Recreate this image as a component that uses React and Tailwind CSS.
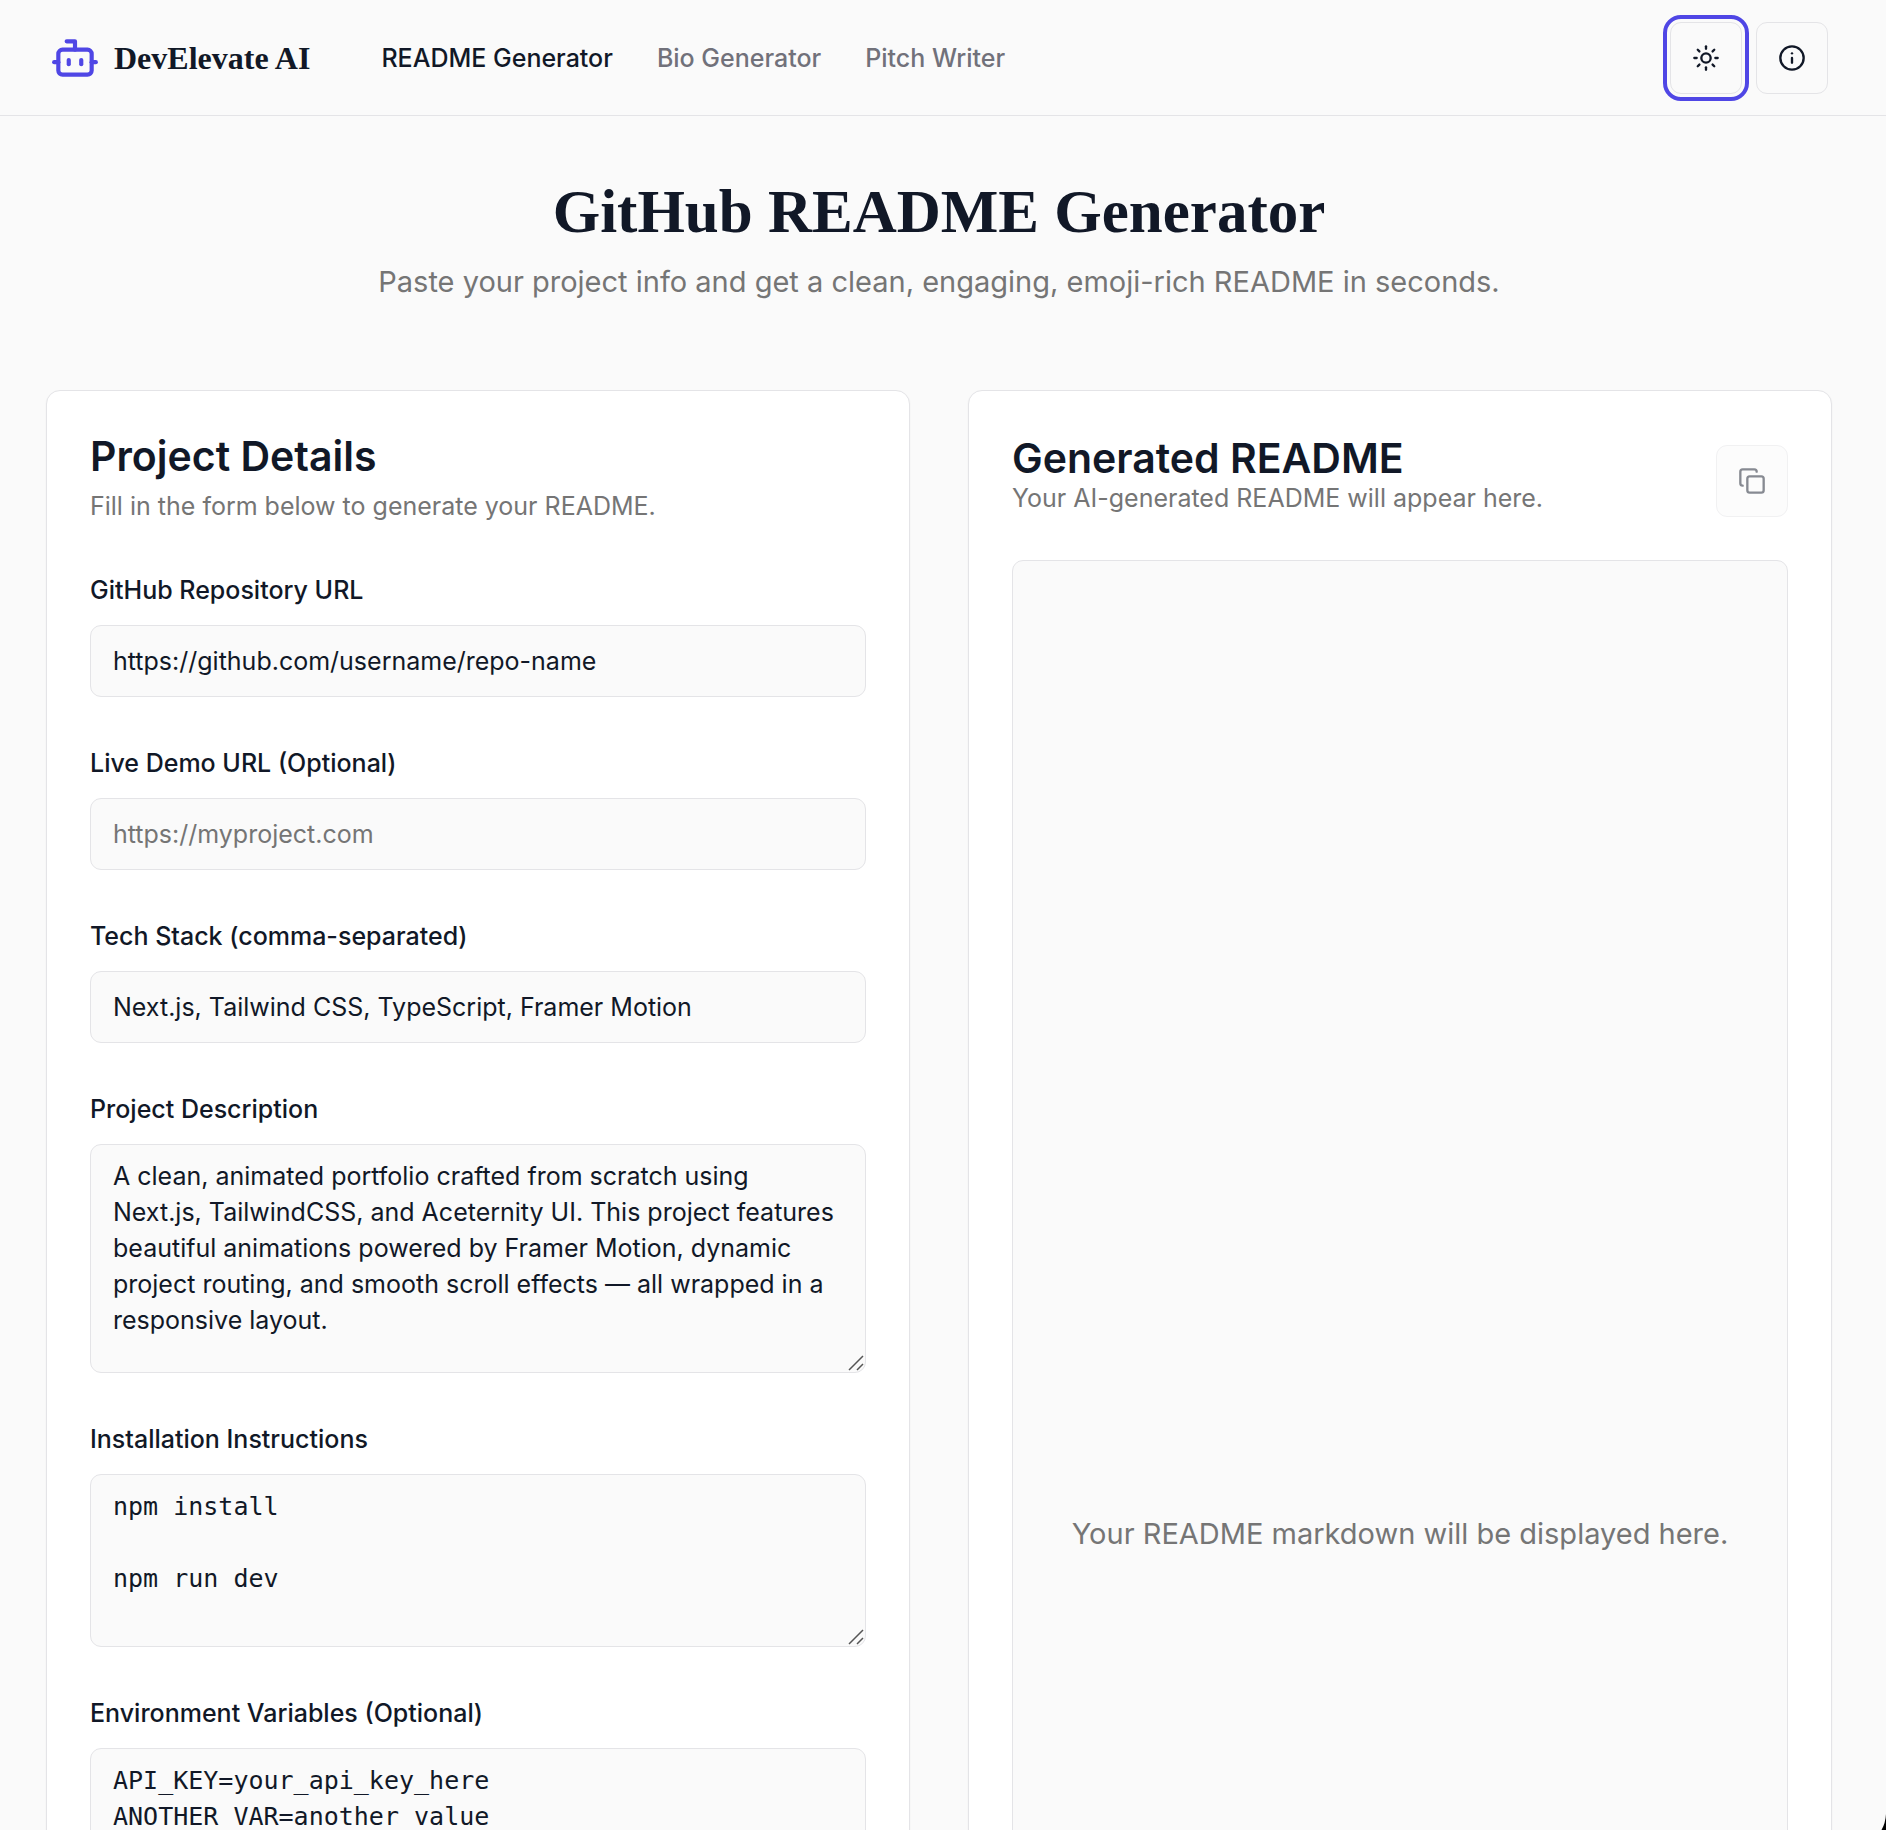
import { Bot, Copy, Info, Sun } from "lucide-react";

const NAV_LINKS = [
  { label: "README Generator", active: true },
  { label: "Bio Generator", active: false },
  { label: "Pitch Writer", active: false },
];

const BOX =
  "block w-full rounded-[11px] border border-[#e4e4e7] bg-[#fafafa] px-[22px] text-[25px] leading-[36px] text-[#111827] outline-none placeholder:text-[#757575]";

function ResizeGrip() {
  return (
    <svg
      className="pointer-events-none absolute right-0.5 bottom-0.5"
      width="16"
      height="16"
      viewBox="0 0 16 16"
      fill="none"
      stroke="#555555"
      strokeWidth="1.5"
      aria-hidden="true"
    >
      <path d="M1 15 15 1M9 15l6-6" />
    </svg>
  );
}

function Field({ id, label, children }) {
  return (
    <div>
      <label htmlFor={id} className="mb-[17px] block text-[25px] leading-[36px] font-medium">
        {label}
      </label>
      {children}
    </div>
  );
}

function TextField({ id, label, ...props }) {
  return (
    <Field id={id} label={label}>
      <input id={id} type="text" className={`${BOX} h-[72px]`} {...props} />
    </Field>
  );
}

function AreaField({ id, label, className, ...props }) {
  return (
    <Field id={id} label={label}>
      <div className="relative">
        <textarea
          id={id}
          className={`${BOX} resize-none overflow-hidden ${className}`}
          {...props}
        />
        <ResizeGrip />
      </div>
    </Field>
  );
}

function IconButton({ label, className = "", children, ...props }) {
  return (
    <button
      type="button"
      aria-label={label}
      className={`flex size-[72px] shrink-0 items-center justify-center rounded-[11px] border border-[#e4e4e7] bg-[#fafafa] ${className}`}
      {...props}
    >
      {children}
    </button>
  );
}

export default function App() {
  return (
    <div className="relative h-screen overflow-hidden bg-[#fafafa] font-['Inter',sans-serif] text-[#111827]">
      <div className="h-full overflow-y-auto [scrollbar-width:none]">
        <header className="flex h-[116px] items-center border-b border-[#e4e4e7] pr-[58px] pl-[50px]">
          <a href="#home" className="flex items-center gap-[14px]">
            <Bot size={50} className="text-[#4f46e5]" />
            <span className="font-['Liberation_Serif',serif] text-[32px] leading-[50px] font-bold">
              DevElevate AI
            </span>
          </a>
          <nav className="ml-[71px] flex items-center gap-[44px] text-[25px] leading-[36px] font-medium">
            {NAV_LINKS.map((link) => (
              <a
                key={link.label}
                href="#nav"
                className={link.active ? "text-[#111827]" : "text-[#71717a]"}
              >
                {link.label}
              </a>
            ))}
          </nav>
          <div className="ml-auto flex items-center gap-[14px]">
            <IconButton
              label="Toggle theme"
              className="outline-4 outline-offset-3 outline-[#4f46e5]"
            >
              <Sun size={28} />
            </IconButton>
            <IconButton label="About">
              <Info size={28} />
            </IconButton>
          </div>
        </header>

        <main className="pt-16 pr-[54px] pb-16 pl-[46px]">
          <div className="text-center">
            <h1 className="font-['Liberation_Serif',serif] text-[61px] leading-[64px] font-bold">
              GitHub README Generator
            </h1>
            <p className="mt-[18px] text-[29px] leading-[40px] text-[#757575]">
              Paste your project info and get a clean, engaging, emoji-rich README in seconds.
            </p>
          </div>

          <div className="mt-[88px] grid grid-cols-2 gap-[58px]">
            <section className="rounded-[14px] border border-[#e4e4e7] bg-white p-[43px] shadow-xs">
              <h2 className="text-[41px] leading-[44px] font-semibold">Project Details</h2>
              <p className="mt-[10px] text-[25px] leading-[36px] text-[#757575]">
                Fill in the form below to generate your README.
              </p>
              <form className="mt-12 flex flex-col gap-12">
                <TextField
                  id="repo"
                  label="GitHub Repository URL"
                  defaultValue="https://github.com/username/repo-name"
                />
                <TextField
                  id="demo"
                  label="Live Demo URL (Optional)"
                  placeholder="https://myproject.com"
                />
                <TextField
                  id="stack"
                  label="Tech Stack (comma-separated)"
                  defaultValue="Next.js, Tailwind CSS, TypeScript, Framer Motion"
                />
                <AreaField
                  id="description"
                  label="Project Description"
                  className="h-[229px] py-[13px]"
                  defaultValue="A clean, animated portfolio crafted from scratch using Next.js, TailwindCSS, and Aceternity UI. This project features beautiful animations powered by Framer Motion, dynamic project routing, and smooth scroll effects — all wrapped in a responsive layout."
                />
                <AreaField
                  id="install"
                  label="Installation Instructions"
                  className="h-[173px] py-[14px] font-['DejaVu_Sans_Mono',monospace]"
                  defaultValue={"npm install\n\nnpm run dev"}
                />
                <AreaField
                  id="env"
                  label="Environment Variables (Optional)"
                  className="h-[173px] py-[14px] font-['DejaVu_Sans_Mono',monospace]"
                  defaultValue={"API_KEY=your_api_key_here\nANOTHER_VAR=another_value"}
                />
              </form>
            </section>

            <section className="rounded-[14px] border border-[#e4e4e7] bg-white p-[43px] shadow-xs">
              <div className="flex min-h-[83px] items-end justify-between">
                <div className="self-start">
                  <h2 className="pt-0.5 text-[41px] leading-[44px] font-semibold">
                    Generated README
                  </h2>
                  <p className="text-[25px] leading-[36px] text-[#757575]">
                    Your AI-generated README will appear here.
                  </p>
                </div>
                <IconButton label="Copy README" className="opacity-50" disabled>
                  <Copy size={28} />
                </IconButton>
              </div>
              <div className="mt-[43px] flex min-h-[1948px] items-center justify-center rounded-[11px] border border-[#e4e4e7] bg-[#fafafa] p-6">
                <p className="text-[29px] leading-[40px] text-[#757575]">
                  Your README markdown will be displayed here.
                </p>
              </div>
            </section>
          </div>
        </main>
      </div>

      <svg
        className="pointer-events-none absolute right-0 bottom-0"
        width="5"
        height="16"
        viewBox="0 0 5 16"
        aria-hidden="true"
      >
        <path d="M5 0Q4.500 9 .5 16H5Z" fill="#000000" />
      </svg>
    </div>
  );
}
